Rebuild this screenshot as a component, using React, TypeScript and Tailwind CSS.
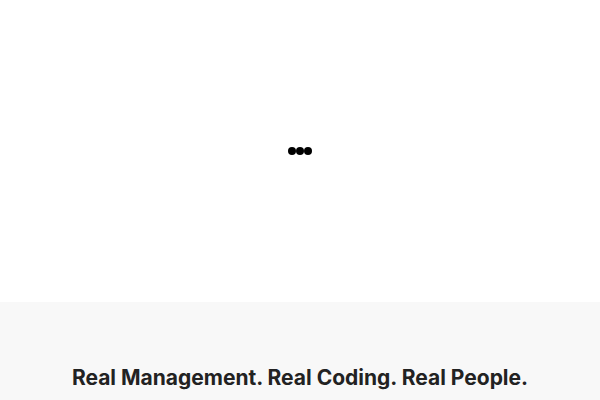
export default function App() {
  return (
    <div className="w-[600px] h-[400px] overflow-hidden bg-white" style={{ fontFamily: 'Inter, "Open Sans", sans-serif' }}>
      <div className="h-[302px] flex items-center justify-center">
        <div className="flex items-center">
          <span className="block w-2 h-2 rounded-full bg-black" />
          <span className="block w-2 h-2 rounded-full bg-black" />
          <span className="block w-2 h-2 rounded-full bg-black" />
        </div>
      </div>
      <div className="h-[98px] bg-[#f8f8f8] pt-[62px] text-center">
        <h2 className="text-[21px] leading-[28px] font-bold text-[#222]">
          Real Management. Real Coding. Real People.
        </h2>
      </div>
    </div>
  );
}
